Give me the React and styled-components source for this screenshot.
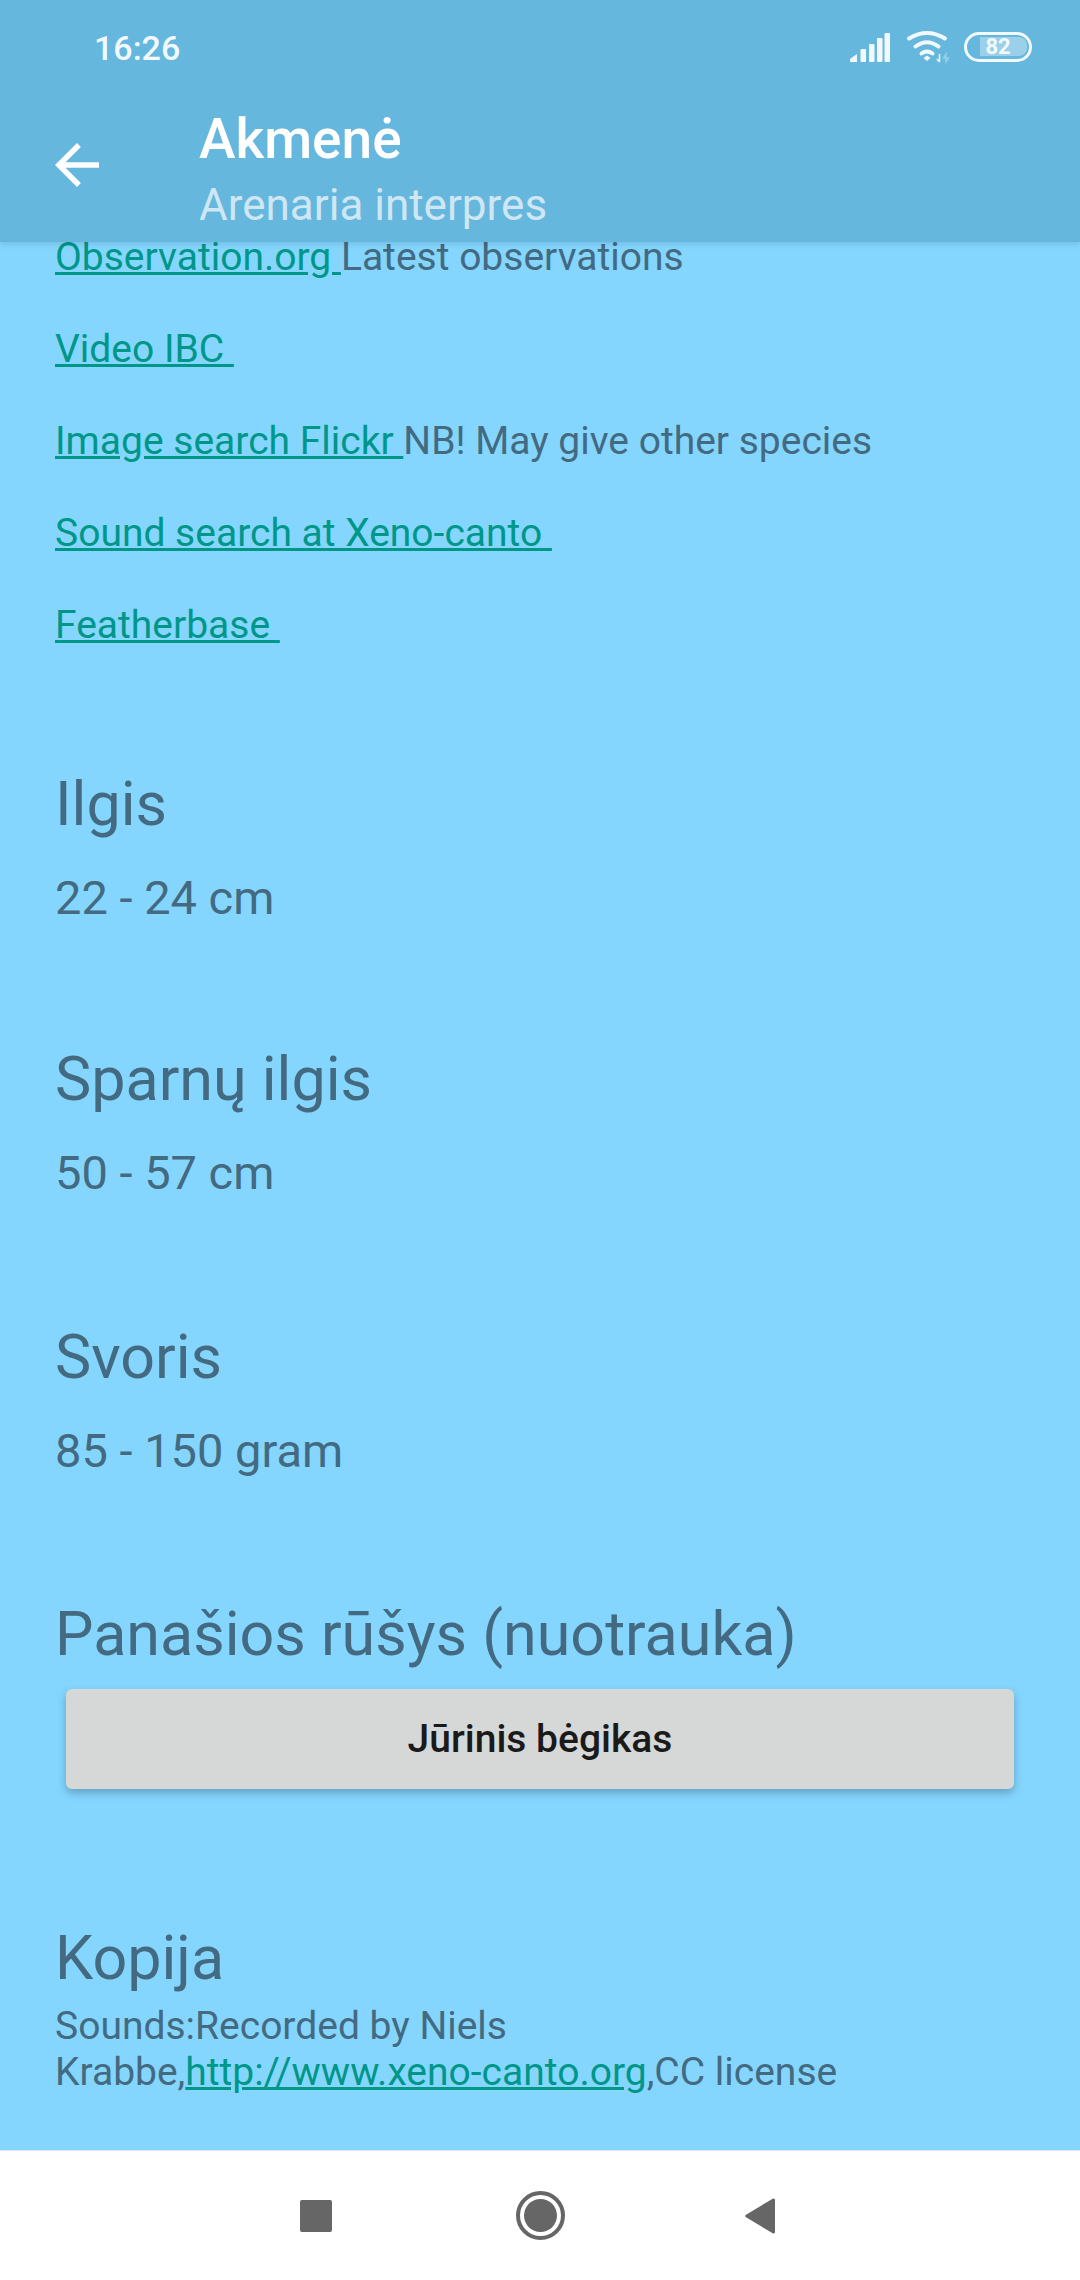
import React from "react";
import styled, { createGlobalStyle } from "styled-components";

const GlobalStyle = createGlobalStyle`
  html, body {
    margin: 0;
    padding: 0;
    background: #84d6ff;
  }
  * {
    box-sizing: border-box;
  }
`;

const Screen = styled.div`
  width: 1080px;
  height: 2280px;
  display: flex;
  flex-direction: column;
  overflow: hidden;
  background: #84d6ff;
  font-family: Roboto, "Noto Sans", sans-serif;
`;

const Header = styled.header`
  height: 242px;
  flex: none;
  background: #65b7de;
  box-shadow: 0 2px 6px rgba(0, 0, 0, 0.12);
  position: relative;
  z-index: 1;
`;

const StatusBar = styled.div`
  height: 94px;
  display: flex;
  align-items: center;
  justify-content: space-between;
  padding: 0 48px 0 94px;
  color: #f2f9fd;
`;

const Clock = styled.span`
  font-size: 34px;
  font-weight: 500;
  padding-top: 2px;
`;

const StatusIcons = styled.div`
  display: flex;
  align-items: center;
  gap: 16px;
`;

const Battery = styled.div`
  width: 68px;
  height: 30px;
  border: 3px solid #f2f9fd;
  border-radius: 15px;
  position: relative;
  display: flex;
  align-items: center;
  justify-content: center;
  font-size: 22px;
  font-weight: 700;
  line-height: 1;
  overflow: hidden;
  &::before {
    content: "";
    position: absolute;
    left: 13px;
    top: 2px;
    bottom: 3px;
    width: 47px;
    border-radius: 0 8px 8px 0;
    background: rgba(255, 255, 255, 0.35);
  }
`;

const BatteryText = styled.span`
  position: relative;
`;

const TitleBar = styled.div`
  display: flex;
  align-items: flex-start;
`;

const BackButton = styled.div`
  width: 199px;
  padding: 38px 0 0 44px;
  flex: none;
  line-height: 0;
`;

const Titles = styled.div`
  display: flex;
  flex-direction: column;
  padding-top: 12px;
`;

const Title = styled.div`
  color: #ffffff;
  font-size: 55px;
  font-weight: 500;
  line-height: 66px;
`;

const Subtitle = styled.div`
  color: #cfe6f3;
  font-size: 44px;
  line-height: 60px;
  margin-top: 3px;
`;

const Content = styled.main`
  flex: 1;
  min-height: 0;
  padding: 0 55px;
  color: #436a80;
`;

const LinkRow = styled.p`
  margin: 0;
  height: 92px;
  font-size: 39px;
  line-height: 28px;
`;

const LinkList = styled.div`
  padding-top: 1px;
  margin-bottom: 23px;
`;

const Link = styled.a`
  color: #009688;
  text-decoration: underline;
  white-space: pre-wrap;
`;

const Section = styled.section`
  margin-top: ${(p) => p.$top}px;
`;

const Heading = styled.h2`
  margin: 0;
  font-size: 61px;
  font-weight: 400;
  line-height: 70px;
`;

const Value = styled.p`
  margin: 34px 0 0;
  font-size: 47px;
  line-height: 50px;
`;

const SpeciesButton = styled.button`
  display: block;
  width: 948px;
  height: 100px;
  margin: 20px 0 0 11px;
  border: none;
  border-radius: 6px;
  background: #d6d8d8;
  box-shadow: 0 4px 8px rgba(0, 0, 0, 0.25);
  color: #1a1a1a;
  font-family: inherit;
  font-size: 39px;
  font-weight: 500;
`;

const Credits = styled.p`
  margin: 10px 0 0;
  font-size: 39px;
  line-height: 46px;
`;

const NavBar = styled.nav`
  height: 130px;
  flex: none;
  background: #ffffff;
  border-top: 1px solid #e3e6e8;
  display: flex;
  align-items: center;
  padding-left: 300px;
`;

const NavIcon = styled.svg`
  flex: none;
  margin-left: ${(p) => p.$left || 0}px;
`;

const SignalIcon = () => (
  <svg width="40" height="29" viewBox="0 0 40 29" fill="#f2f9fd">
    <path d="M0 26l7-5v8H1a1 1 0 0 1-1-1z" />
    <rect x="10.500" y="16" width="5.500" height="13" rx="1" />
    <rect x="19" y="11" width="5.500" height="18" rx="1" />
    <rect x="27" y="5" width="5.500" height="24" rx="1" />
    <rect x="34.500" y="0" width="5.500" height="29" rx="1" />
  </svg>
);

const WifiIcon = () => (
  <svg width="42" height="34" viewBox="0 0 42 34" fill="none" stroke="#f2f9fd" strokeWidth="4" strokeLinecap="round" overflow="visible">
    <path d="M3 8.500Q21 -2.500 39 8.500" />
    <path d="M9.500 16.500Q21 8 32.500 16.500" />
    <path d="M15.500 23.500Q21 19.500 26.500 23.500" />
    <path d="M17.500 28l3.500-2.500 3.500 2.500-3.500 3z" fill="#f2f9fd" stroke="none" />
    <path d="M33.500 24v8M31 29l2.500 3" strokeWidth="1.500" strokeLinecap="butt" />
    <path d="M40 32v-8l-2.500 4h5z" strokeWidth="1.500" strokeLinecap="butt" opacity="0.35" />
  </svg>
);

const BackArrow = () => (
  <svg width="66" height="66" viewBox="0 0 24 24" fill="#ffffff">
    <path d="M20 11H7.830l5.590-5.590L12 4l-8 8 8 8 1.410-1.410L7.830 13H20v-2z" />
  </svg>
);

const App = () => (
  <Screen>
    <GlobalStyle />
    <Header>
      <StatusBar>
        <Clock>16:26</Clock>
        <StatusIcons>
          <SignalIcon />
          <WifiIcon />
          <Battery>
            <BatteryText>82</BatteryText>
          </Battery>
        </StatusIcons>
      </StatusBar>
      <TitleBar>
        <BackButton>
          <BackArrow />
        </BackButton>
        <Titles>
          <Title>Akmenė</Title>
          <Subtitle>Arenaria interpres</Subtitle>
        </Titles>
      </TitleBar>
    </Header>
    <Content>
      <LinkList>
        <LinkRow>
          <Link>Observation.org </Link>Latest observations
        </LinkRow>
        <LinkRow>
          <Link>Video IBC </Link>
        </LinkRow>
        <LinkRow>
          <Link>Image search Flickr </Link>NB! May give other species
        </LinkRow>
        <LinkRow>
          <Link>Sound search at Xeno-canto </Link>
        </LinkRow>
        <LinkRow>
          <Link>Featherbase </Link>
        </LinkRow>
      </LinkList>
      <Section $top={66}>
        <Heading>Ilgis</Heading>
        <Value>22 - 24 cm</Value>
      </Section>
      <Section $top={121}>
        <Heading>Sparnų ilgis</Heading>
        <Value>50 - 57 cm</Value>
      </Section>
      <Section $top={124}>
        <Heading>Svoris</Heading>
        <Value>85 - 150 gram</Value>
      </Section>
      <Section $top={123}>
        <Heading>Panašios rūšys (nuotrauka)</Heading>
        <SpeciesButton>Jūrinis bėgikas</SpeciesButton>
      </Section>
      <Section $top={134}>
        <Heading>Kopija</Heading>
        <Credits>
          Sounds:Recorded by Niels
          <br />
          Krabbe,<Link>http://www.xeno-canto.org</Link>,CC license
        </Credits>
      </Section>
    </Content>
    <NavBar>
      <NavIcon width="32" height="32" viewBox="0 0 32 32">
        <rect width="32" height="32" rx="2" fill="#666666" />
      </NavIcon>
      <NavIcon $left={184} width="49" height="49" viewBox="0 0 49 49">
        <circle cx="24.500" cy="24.500" r="22.500" fill="none" stroke="#666666" strokeWidth="4" />
        <circle cx="24.500" cy="24.500" r="16.500" fill="#666666" />
      </NavIcon>
      <NavIcon $left={180} width="30" height="36" viewBox="0 0 30 36">
        <path d="M30 2v32a1.500 1.500 0 0 1-2.300 1.300L1 19.300a1.500 1.500 0 0 1 0-2.600L27.700.7A1.500 1.500 0 0 1 30 2z" fill="#666666" />
      </NavIcon>
    </NavBar>
  </Screen>
);

export default App;
